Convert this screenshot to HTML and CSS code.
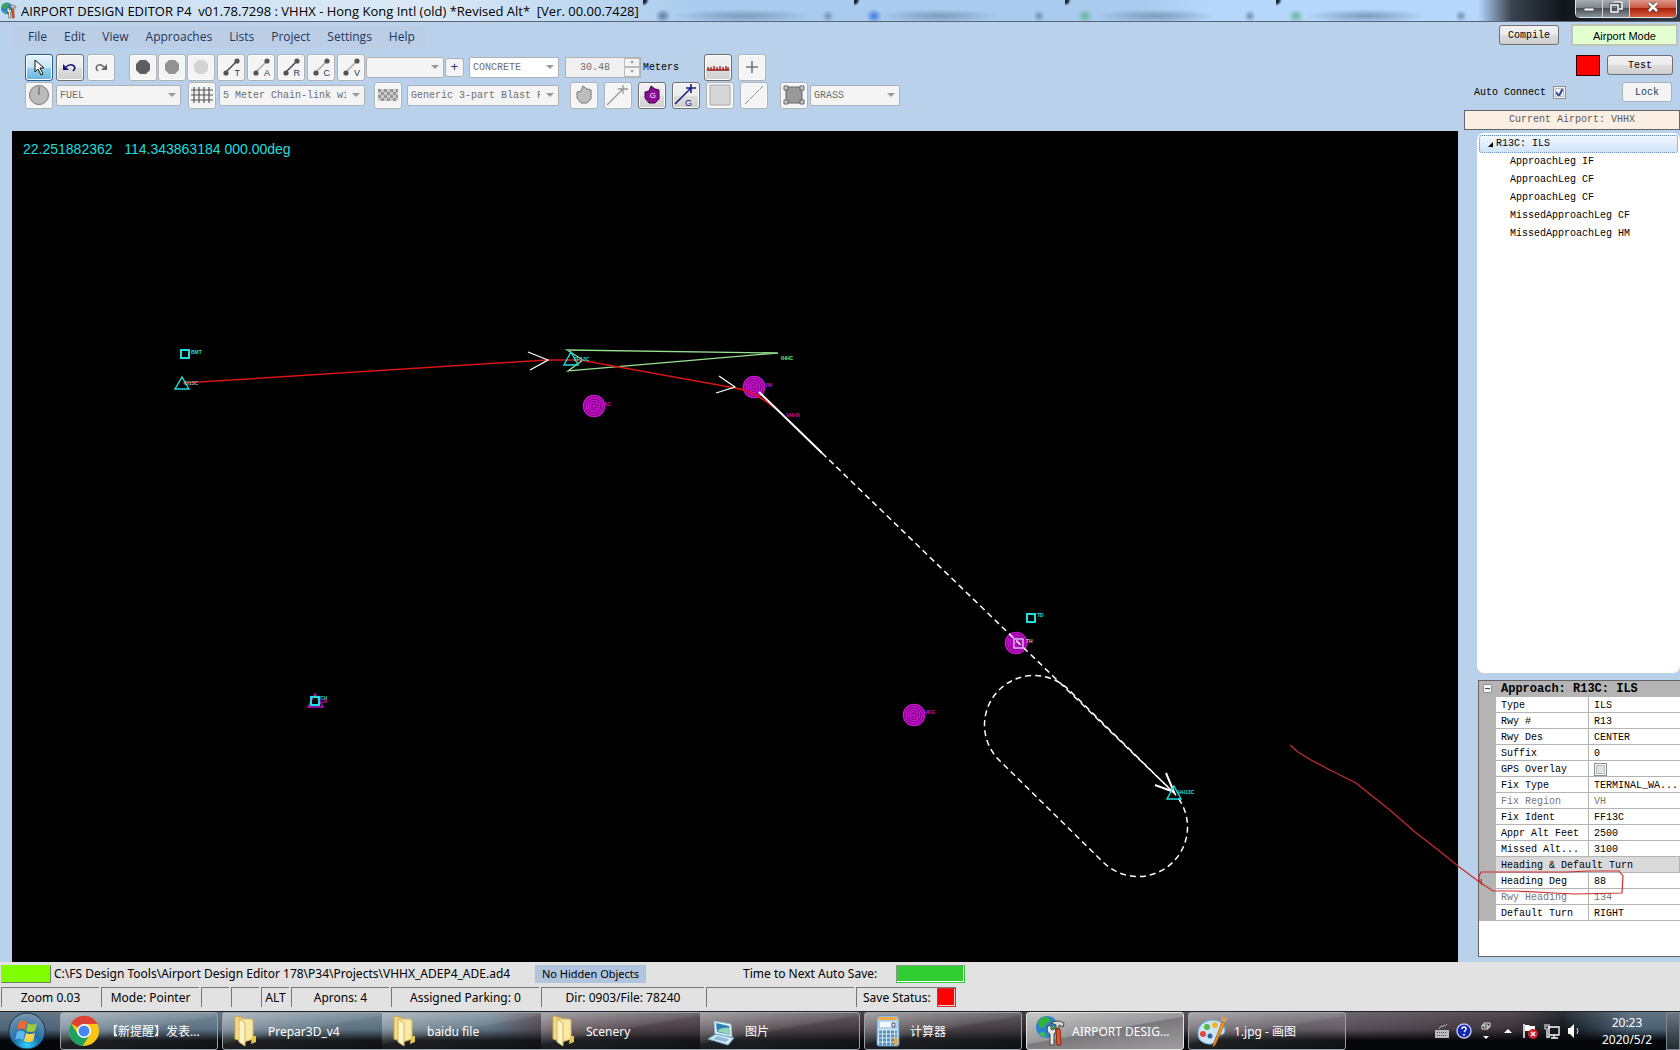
FILE: index.html
```html
<!DOCTYPE html>
<html lang="en">
<head>
  <meta charset="UTF-8" />
  <meta name="viewport" content="width=device-width, initial-scale=1.0"/>
  <title>Airport Design Editor P4</title>
  <link rel="stylesheet" href="styles.css">
</head>
<body>
  <!-- shared icons -->
  <svg class="defs" width="0" height="0">
    <defs>
      <symbol id="i-line" viewBox="0 0 26 24">
        <path d="M8 17L19 6" stroke="currentColor" stroke-width="1.5"/>
        <circle cx="8" cy="18" r="2.6" fill="#555"/><circle cx="19" cy="6" r="2.6" fill="#555"/>
      </symbol>
      <symbol id="i-folder" viewBox="0 0 32 32">
        <path d="M5 1l9 2v24l-9-3z" fill="#f4dd87" stroke="#c9a94c"/>
        <path d="M9 4h12q2 0 2 2v18l-12 4z" fill="#f9e9a6" stroke="#d4b65d"/>
        <path d="M9 4l6 4v23l-6-4z" fill="#fdf4c4" stroke="#d4b65d"/>
        <path d="M22 21h4v6l-5 2z" fill="#e7c84c"/>
      </symbol>
      <symbol id="i-globe" viewBox="0 0 32 32">
        <circle cx="13" cy="12" r="11" fill="#2d7fd0"/>
        <path d="M4 7q4-6 10-5l3 4-5 3-2 4-5-1zM13 13l7-2 3 5-5 6-4-3z" fill="#35b23d"/>
        <path d="M5 18l5-1 2 5q-5 0-7-4z" fill="#3bc446"/>
        <path d="M13 14q0-4 4-4v4l2 1 2-2q2 4-1 6v11h-4V19q-3-1-3-5z" fill="#e6e6e6" stroke="#444"/>
        <path d="M17 8q6-4 13 0l-1 4-4-2v3h-3v-3z" fill="#d8d8d8" stroke="#444"/>
        <path d="M22 14h4l1 16h-4z" fill="#e2572b" stroke="#8a2b10"/>
      </symbol>
      <symbol id="i-vor" viewBox="-12 -12 24 24">
        <circle r="11" fill="#700070"/>
        <g fill="none" stroke="#d010d8" stroke-width="1.4">
          <circle r="10.6"/><circle r="8.2"/><circle r="5.8"/><circle r="3.4"/><circle r="1"/>
        </g>
      </symbol>
    </defs>
  </svg>

  <header class="titlebar">
    <div class="glass"><i></i><i></i><i></i><i></i></div>
    <svg class="app-icon"><use href="#i-globe"/></svg>
    <h1>AIRPORT DESIGN EDITOR P4&nbsp; v01.78.7298 : VHHX - Hong Kong Intl (old) *Revised Alt*&nbsp; [Ver. 00.00.7428]</h1>
    <div class="window-buttons">
      <button aria-label="Minimize"><svg viewBox="0 0 14 12"><path d="M2 7h10v3H2z" fill="#fff" stroke="#555"/></svg></button>
      <button aria-label="Restore"><svg viewBox="0 0 14 12"><path d="M5 1h8v7h-3M2 4h7v7H2z" fill="none" stroke="#444" stroke-width="3"/><path d="M5 1h8v7h-3M2 4h7v7H2z" fill="none" stroke="#fff" stroke-width="1.5"/></svg></button>
      <button class="close" aria-label="Close"><svg viewBox="0 0 14 12"><path d="M3 2l8 8M11 2l-8 8" stroke="#533" stroke-width="4"/><path d="M3 2l8 8M11 2l-8 8" stroke="#fff" stroke-width="2.5"/></svg></button>
    </div>
  </header>

  <main class="client">
    <section class="editor">
      <nav class="menu">
        <a href="#">File</a><a href="#">Edit</a><a href="#">View</a><a href="#">Approaches</a><a href="#">Lists</a><a href="#">Project</a><a href="#">Settings</a><a href="#">Help</a>
      </nav>

      <div class="toolbar">
        <div class="group spaced">
          <button class="tool active" aria-label="Pointer"><svg viewBox="0 0 26 24"><path d="M9 5v12l3-3 3 6 2-1-3-6h4z" fill="#fff" stroke="#111"/></svg></button>
          <button class="tool on" aria-label="Undo"><svg viewBox="0 0 26 24"><path d="M9 12q4-4 8-1 2 2-1 5" fill="none" stroke="#14147c" stroke-width="1.6"/><path d="M6 9v6h6z" fill="#14147c"/></svg></button>
          <button class="tool" aria-label="Redo"><svg viewBox="0 0 26 24"><path d="M16 12q-4-4-7-1-2 2 1 5" fill="none" stroke="#666" stroke-width="1.5"/><path d="M19 9v6h-6z" fill="#666"/></svg></button>
        </div>
        <div class="group tight">
          <button class="tool" aria-label="Dark apron"><svg viewBox="0 0 26 24"><path d="M10 5h6l4 4v6l-4 4h-6l-4-4V9z" fill="#5e5e5e"/></svg></button>
          <button class="tool" aria-label="Medium apron"><svg viewBox="0 0 26 24"><path d="M10 5h6l4 4v6l-4 4h-6l-4-4V9z" fill="#929292"/></svg></button>
          <button class="tool" aria-label="Light apron"><svg viewBox="0 0 26 24"><path d="M10 5h6l4 4v6l-4 4h-6l-4-4V9z" fill="#d4d4d4"/></svg></button>
        </div>
        <div class="group links">
          <button class="tool dark" aria-label="Taxiway"><svg><use href="#i-line"/></svg><b>T</b></button>
          <button class="tool pale" aria-label="Apron link"><svg><use href="#i-line"/></svg><b>A</b></button>
          <button class="tool dark" aria-label="Runway link"><svg><use href="#i-line"/></svg><b>R</b></button>
          <button class="tool pale" aria-label="Closed link"><svg><use href="#i-line"/></svg><b>C</b></button>
          <button class="tool pale" aria-label="Vehicle link"><svg><use href="#i-line"/></svg><b>V</b></button>
        </div>
        <div class="group tight naming">
          <select class="w-name" aria-label="Name" disabled><option></option></select>
          <button class="small" aria-label="Add name">+</button>
        </div>
        <select class="w-surface open" aria-label="Surface"><option>CONCRETE</option></select>
        <div class="group width">
          <div class="spinner">
            <input id="width" type="text" value="30.48" disabled>
            <div class="spin"><button aria-label="Up">▲</button><button aria-label="Down">▼</button></div>
          </div>
          <label for="width">Meters</label>
        </div>
        <div class="group wide">
          <button class="tool on" aria-label="Ruler"><svg viewBox="0 0 26 24"><path d="M2 15h22M3 15v-3M6 15v-3M9 15v-4M12 15v-3M15 15v-4M18 15v-3M21 15v-4M23 15v-3" stroke="#a01818" stroke-width="1.3"/></svg></button>
          <button class="tool" aria-label="Add"><svg viewBox="0 0 26 24"><path d="M13 6v12M7 12h12" stroke="#777" stroke-width="1.6"/></svg></button>
        </div>
      </div>

      <div class="toolbar">
        <div class="group spaced fuel">
          <button class="tool" aria-label="Fuel"><svg viewBox="0 0 26 24"><circle cx="13" cy="12" r="9.500" fill="#bbb" stroke="#777"/><path d="M13 4v8" stroke="#777" stroke-width="1.500"/></svg></button>
          <select class="w-fuel" aria-label="Object" disabled><option>FUEL</option></select>
        </div>
        <div class="group spaced fence">
          <button class="tool" aria-label="Fence"><svg viewBox="0 0 26 24"><path d="M2 7h22M2 12h22M2 17h22M5 4v16M10 4v16M15 4v16M20 4v16" stroke="#555" stroke-width="1.2"/></svg></button>
          <select class="w-fence" aria-label="Fence type" disabled><option>5 Meter Chain-link wi</option></select>
        </div>
        <div class="group spaced blast">
          <button class="tool" aria-label="Blast fence"><svg viewBox="0 0 26 24"><path d="M3 6h20v12H3z" fill="#ccc"/><path d="M3 7.500h20M3 13.500h20" stroke="#969696" stroke-width="3" stroke-dasharray="3 3"/><path d="M6 10.500h17M6 16.500h17" stroke="#969696" stroke-width="3" stroke-dasharray="3 3"/></svg></button>
          <select class="w-blast" aria-label="Blast fence type" disabled><option>Generic 3-part Blast Fence</option></select>
        </div>
        <div class="group wide shapes">
          <button class="tool" aria-label="Polygon"><svg viewBox="0 0 26 24"><path d="M12 3l4 3 4 1v9l-4 4h-6l-4-5V9l4-1z" fill="#bdbdbd" stroke="#777"/></svg></button>
          <button class="tool" aria-label="Line"><svg viewBox="0 0 26 24"><path d="M2 22L18 6M13 6h10M18 2v9" stroke="#999" stroke-width="1.300"/></svg></button>
          <button class="tool on" aria-label="Ground polygon"><svg viewBox="0 0 26 24"><path d="M12 3l4 3 4 1v9l-4 4h-6l-4-5V9l4-1z" fill="#8b0a96" stroke="#3d0440"/></svg><b class="mid">G</b></button>
          <button class="tool on" aria-label="Ground line"><svg viewBox="0 0 26 24"><path d="M2 21L18 5M13 5h10M18 1v9" stroke="#1a1a8c" stroke-width="1.600"/></svg><b class="blue">G</b></button>
          <button class="tool" aria-label="Area"><svg viewBox="0 0 26 24"><path d="M3 2h20v20H3z" fill="#d7d7d7" stroke="#aaa"/></svg></button>
          <button class="tool" aria-label="Dashed line"><svg viewBox="0 0 26 24"><path d="M4 21L22 3" stroke="#888" stroke-dasharray="6 1"/></svg></button>
        </div>
        <div class="group links">
          <button class="tool" aria-label="Terrain"><svg viewBox="0 0 26 24"><path d="M5 4h16v16H5z" fill="#999" stroke="#666"/><path d="M3 3h4v4H3zM19 3h4v4h-4zM3 17h4v4H3zM19 17h4v4h-4z" fill="#ccc" stroke="#666"/></svg></button>
          <select class="w-surface" aria-label="Terrain type" disabled><option>GRASS</option></select>
        </div>
      </div>

      <div class="chart">
        <p class="position">22.251882362&nbsp;&nbsp; 114.343863184 000.00deg</p>
        <svg viewBox="12 131 1446 831" preserveAspectRatio="xMinYMin meet">
          <!-- ils feather -->
          <path class="ils" d="M567 350L778 353L568 371L583 360Z"/>
          <!-- approach legs -->
          <path class="leg" d="M183 383L547 360H580L735 388Q755 391 776 409"/>
          <path class="arrow" d="M528 352L548 360L530 370M719 376L735 387L716 393"/>
          <!-- vor / ndb -->
          <g>
            <use href="#i-vor" x="742" y="375" width="24" height="24"/>
            <use href="#i-vor" x="582" y="394" width="24" height="24"/>
            <use href="#i-vor" x="1004" y="631" width="24" height="24"/>
            <use href="#i-vor" x="902" y="703" width="24" height="24"/>
          </g>
          <path class="leg" d="M735 388Q755 391 776 409"/>
          <!-- missed approach and hold -->
          <path class="runway" d="M759 392L822 453"/>
          <path class="missed" d="M822 453L1172 791"/>
          <path class="missed" d="M1172 791A49 49 0 0 1 1104 863L999 760A49 49 0 0 1 1069 690L1172 791"/>
          <path class="arrow bold" d="M1166 773L1174 792L1155 785"/>
          <!-- fixes -->
          <path class="fix magenta" d="M315 694L323 707H308Z"/>
          <path class="fix" d="M182 377L189 389H175ZM571 352L578 365H564ZM1174 786L1181 799H1167Z"/>
          <path class="fix thick" d="M181 350h8v8h-8ZM1027 614h8v8h-8ZM311 697h8v8h-8Z"/>
          <path class="fix lilac" d="M1014 639h9v9h-9Z"/>
          <g class="names">
            <text x="191" y="354">BMT</text>
            <text class="grey" x="184" y="385">CI13C</text>
            <text x="574" y="361">FF13C</text>
            <text class="green" x="781" y="360">IHHC</text>
            <text class="magenta" x="764" y="387">HW</text>
            <text class="magenta" x="604" y="406">SC</text>
            <text class="magenta" x="786" y="417">VHHX</text>
            <text x="1037" y="617">TD</text>
            <text class="lilac" x="1026" y="643">TH</text>
            <text class="magenta" x="924" y="714">HKG</text>
            <text x="1178" y="794">HH13C</text>
            <text x="320" y="700">CH</text>
            <text class="magenta" x="320" y="703">CH</text>
          </g>
        </svg>
      </div>
    </section>

    <aside class="side">
      <div class="side-row top">
        <button class="btn compile">Compile</button>
        <output class="mode">Airport Mode</output>
      </div>
      <div class="side-row test">
        <span class="lamp"></span>
        <button class="btn">Test</button>
      </div>
      <div class="side-row lock">
        <label for="auto">Auto Connect</label>
        <input id="auto" class="check" type="checkbox" checked>
        <button class="btn dim">Lock</button>
      </div>
      <div class="current">Current Airport: VHHX</div>
      <ul class="tree">
        <li class="root"><svg viewBox="0 0 8 8"><path d="M7 2v5H2z"/></svg>R13C: ILS</li>
        <li>ApproachLeg IF</li>
        <li>ApproachLeg CF</li>
        <li>ApproachLeg CF</li>
        <li>MissedApproachLeg CF</li>
        <li>MissedApproachLeg HM</li>
      </ul>
      <div class="properties">
        <table>
          <colgroup><col class="gutter"><col class="key"><col></colgroup>
          <tr class="title"><td><button class="fold" aria-label="Collapse"></button></td><th colspan="2">Approach: R13C: ILS</th></tr>
          <tr><td></td><th>Type</th><td>ILS</td></tr>
          <tr><td></td><th>Rwy #</th><td>R13</td></tr>
          <tr><td></td><th>Rwy Des</th><td>CENTER</td></tr>
          <tr><td></td><th>Suffix</th><td>0</td></tr>
          <tr><td></td><th><label for="gps">GPS Overlay</label></th><td><input id="gps" class="check" type="checkbox"></td></tr>
          <tr><td></td><th>Fix Type</th><td>TERMINAL_WA...</td></tr>
          <tr class="off"><td></td><th>Fix Region</th><td>VH</td></tr>
          <tr><td></td><th>Fix Ident</th><td>FF13C</td></tr>
          <tr><td></td><th>Appr Alt Feet</th><td>2500</td></tr>
          <tr><td></td><th>Missed Alt...</th><td>3100</td></tr>
          <tr class="section"><td></td><th colspan="2">Heading &amp; Default Turn</th></tr>
          <tr><td></td><th>Heading Deg</th><td>88</td></tr>
          <tr class="off"><td></td><th>Rwy Heading</th><td>134</td></tr>
          <tr><td></td><th>Default Turn</th><td>RIGHT</td></tr>
        </table>
      </div>
    </aside>

    <!-- red pen mark over the heading row -->
    <svg class="pen" viewBox="1280 740 400 222"><path d="M1290 745L1298 752L1311 760L1330 770L1344 777L1356 783L1391 811L1415 832L1442 853L1458 866L1478 881L1493 891H1515L1553 893L1575 894L1622 893L1623 876L1619 871L1590 871L1566 872H1481L1479 876V880L1482 885L1481 879"/></svg>
  </main>

  <footer class="status">
    <div class="status-file">
      <span class="bar lime"></span>
      <span class="path">C:\FS Design Tools\Airport Design Editor 178\P34\Projects\VHHX_ADEP4_ADE.ad4</span>
      <span class="hidden-objects">No Hidden Objects</span>
      <span class="autosave">Time to Next Auto Save:</span>
      <span class="bar green"></span>
    </div>
    <div class="cells">
      <span>Zoom 0.03</span><span>Mode: Pointer</span><span></span><span></span><span>ALT</span><span>Aprons: 4</span><span>Assigned Parking: 0</span><span>Dir: 0903/File: 78240</span><span></span><span class="save">Save Status:<i></i></span>
    </div>
  </footer>

  <div class="taskbar">
    <button class="start" aria-label="Start">
      <svg viewBox="0 0 38 38">
        <defs><radialGradient id="orb" cx=".5" cy=".9" r=".9"><stop offset="0" stop-color="#2fd0ff"/><stop offset=".4" stop-color="#1d6fa8"/><stop offset="1" stop-color="#7f98ac"/></radialGradient></defs>
        <circle cx="19" cy="19" r="18" fill="url(#orb)" stroke="#12324c"/>
        <path d="M11 10q4-3 8 0l-2 8q-4-3-8 0z" fill="#ee6a33"/>
        <path d="M20 11q4 3 9 0l-2 8q-5 2-9 0z" fill="#9ccb3c"/>
        <path d="M9 20q4-3 8 0l-2 8q-4-3-8 0z" fill="#5db9f0"/>
        <path d="M18 21q4 2 9 0l-2 8q-5 2-9 0z" fill="#fcd14a"/>
      </svg>
    </button>
    <button class="task">
      <svg viewBox="0 0 32 32"><circle cx="16" cy="16" r="15" fill="#fbc615"/><path d="M16 16L3 8.500A15 15 0 0 1 29.500 9H16z" fill="#dd4335"/><path d="M3 8.500A15 15 0 0 0 14.500 31L22 19.500H10z" fill="#1da160"/><circle cx="16" cy="16" r="7" fill="#fff"/><circle cx="16" cy="16" r="5.500" fill="#4a86f0"/></svg>
      <span>【新提醒】发表...</span>
    </button>
    <div class="task-group">
      <button class="task"><svg><use href="#i-folder"/></svg><span>Prepar3D_v4</span></button>
      <button class="task"><svg><use href="#i-folder"/></svg><span>baidu file</span></button>
      <button class="task"><svg><use href="#i-folder"/></svg><span>Scenery</span></button>
      <button class="task">
        <svg viewBox="0 0 32 32"><path d="M7 6l17 3 1 13-17-3z" fill="#e8f3fa" stroke="#8db8d8"/><path d="M9 8l13 3 1 9-13-3z" fill="#2b7fb5"/><path d="M10 16q5-4 12-3l1 7z" fill="#8fd6b5"/><path d="M1 24l8-5 18 4-6 7z" fill="#d5ebf7" stroke="#6ba7cf"/><path d="M6 24l4-3 12 3-3 3z" fill="#8fb9d3"/></svg>
        <span>图片</span>
      </button>
    </div>
    <button class="task">
      <svg viewBox="0 0 32 32"><rect x="5" y="1" width="22" height="30" rx="2" fill="#cfe6f5" stroke="#4c8fc0"/><path d="M6 2h20v3H6z" fill="#f3a94a"/><path d="M7 6h18v7H7z" fill="#eef8ff" stroke="#8cb7d4"/><path d="M20 8h3v4h-3z" fill="none" stroke="#446"/><path d="M7 17h3m1 0h3m1 0h3m1 0h3m1 0h2M7 21h3m1 0h3m1 0h3m1 0h3m1 0h2M7 25h3m1 0h3m1 0h3m1 0h3M7 29h3m1 0h3m1 0h3m1 0h3" stroke="#538fbd" stroke-width="3"/><path d="M22 23h4v7h-4z" fill="#ecaa38"/></svg>
      <span>计算器</span>
    </button>
    <button class="task current-task"><svg><use href="#i-globe"/></svg><span>AIRPORT DESIG...</span></button>
    <button class="task">
      <svg viewBox="0 0 32 32"><path d="M2 17Q3 7 15 5q14 0 14 10 0 5-6 5-4 1-4 5-1 5-7 4Q1 27 2 17z" fill="#c8e6f7" stroke="#6ea9cf"/><circle cx="7" cy="19" r="3" fill="#e24a3a"/><circle cx="11" cy="12" r="3" fill="#54b948"/><circle cx="19" cy="10" r="3" fill="#f5b32c"/><circle cx="14" cy="21" r="2.500" fill="#355f9e"/><path d="M26 7l3 1-10 22-2 2 1-4z" fill="#ee9b3a" stroke="#b9681a"/><path d="M25 1l7 2-3 5-4-2z" fill="#c99d68"/></svg>
      <span>1.jpg - 画图</span>
    </button>
    <div class="tray">
      <svg viewBox="0 0 16 16"><path d="M1 7h14v8H1z" fill="#bbb"/><path d="M3 9.500h10M3 12.500h10" stroke="#555" stroke-dasharray="1 1"/><path d="M5 6q1-3 4-3t4-2" fill="none" stroke="#bbb"/></svg>
      <svg viewBox="0 0 16 16"><circle cx="8" cy="8" r="7" fill="#1426b8" stroke="#b9c2ea" stroke-width="1.500"/><path d="M6 6q0-2 2-2t2 2q0 1-2 3" fill="none" stroke="#fff" stroke-width="1.500"/><path d="M7 11h2v1.500H7z" fill="#fff"/></svg>
      <svg viewBox="0 0 16 20"><path d="M6 2h6v4H6zM4 4h6v4H4z" fill="#222" stroke="#eee"/><path d="M5 15h6l-3 3z" fill="#fff"/></svg>
      <svg viewBox="0 0 16 16"><path d="M4 10l4-4 4 4z" fill="#fff"/></svg>
      <svg viewBox="0 0 16 16"><path d="M2 1v14" stroke="#fff" stroke-width="1.500"/><path d="M3 2h4l1 1h5v6H8L7 8H3z" fill="#fff"/><circle cx="11" cy="11" r="5" fill="#d3202a"/><path d="M9 9l4 4M13 9l-4 4" stroke="#fff" stroke-width="1.500"/></svg>
      <svg viewBox="0 0 16 16"><path d="M5 4h10v8H5zM7 15h7M10 12v3M3 7v7h3" fill="none" stroke="#fff" stroke-width="1.300"/><path d="M1 1v5h4V1M3 1v3" fill="none" stroke="#fff"/></svg>
      <svg viewBox="0 0 16 16"><path d="M2 5h2l4-4v14l-4-4H2z" fill="#fff"/><path d="M11 5q2 3 0 6" fill="none" stroke="#ddd"/></svg>
    </div>
    <div class="clock"><time>20:23</time><time>2020/5/2</time></div>
    <button class="desktop" aria-label="Show desktop"></button>
  </div>
</body>
</html>
```
FILE: styles.css
```css
* {
  box-sizing: border-box;
}

body {
  margin: 0;
  height: 100vh;
  display: flex;
  flex-direction: column;
  overflow: hidden;
  background: #b9d1ea;
  font-family: "Liberation Mono", monospace;
  font-size: 10px;
  color: #000;
}

button, select, input {
  font: inherit;
  margin: 0;
  padding: 0;
}

.defs {
  position: absolute;
}

/* title bar */
.titlebar {
  position: relative;
  display: flex;
  align-items: center;
  height: 22px;
  flex: none;
  gap: 4px;
  padding-right: 3px;
  background: linear-gradient(90deg, #c5dcf0, #dbe9f6 25%, #a9cbee 42%, #a9cbee 68%, #b5d7fb 72%, #b5d7fb 88%, #39424d 90%, #11161c 93%, #333c48);
  border-bottom: 1px solid #5a6675;
}

.glass {
  position: absolute;
  inset: 0 193px 0 643px;
  display: flex;
}

.glass i {
  flex: 1;
  background:
    radial-gradient(circle at 0 0, #1d2733 3px, transparent 6px),
    radial-gradient(ellipse 8px 7px at 20px 16px, #5f7f9f, transparent),
    radial-gradient(ellipse 70px 7px at 100px 16px, #7d9cbc, transparent),
    radial-gradient(ellipse 6px 6px at 185px 16px, #7590ad, transparent);
}

.glass i:nth-child(2) {
  background:
    radial-gradient(circle at 0 0, #1d2733 3px, transparent 6px),
    radial-gradient(ellipse 8px 7px at 20px 16px, #3c7ddd, transparent),
    radial-gradient(ellipse 60px 7px at 85px 16px, #7d9cbc, transparent),
    radial-gradient(ellipse 6px 6px at 185px 16px, #7590ad, transparent);
}

.glass i:nth-child(n+3) {
  background:
    radial-gradient(circle at 0 0, #1d2733 3px, transparent 6px),
    radial-gradient(ellipse 8px 7px at 20px 16px, #66b99a, transparent),
    radial-gradient(ellipse 60px 7px at 90px 16px, #7d9cbc, transparent),
    radial-gradient(ellipse 6px 6px at 185px 16px, #7590ad, transparent);
}

.app-icon {
  width: 17px;
  height: 17px;
}

.titlebar h1 {
  position: relative;
  margin: 0;
  flex: 1;
  font: 13px "Open Sans", sans-serif;
  white-space: nowrap;
}

.window-buttons {
  position: relative;
  display: flex;
  align-self: flex-start;
  height: 18px;
  border: 1px solid #dce6ee;
  border-top: 0;
  border-radius: 0 0 5px 5px;
  overflow: hidden;
}

.window-buttons button {
  width: 27px;
  border: 0;
  border-right: 1px solid #cdd6de;
  background: linear-gradient(#a8adb3, #7b8188 50%, #4b5158 50%, #8a9199);
}

.window-buttons .close {
  width: 46px;
  border: 0;
  background: linear-gradient(#dc9a8a, #c9513a 50%, #a81f0c 50%, #d8603c);
}

.window-buttons svg {
  width: 14px;
  height: 12px;
}

/* main window */
.client {
  position: relative;
  flex: 1;
  min-height: 0;
  display: grid;
  grid-template-columns: minmax(0, 1fr) 216px;
  gap: 6px;
}

.editor {
  display: flex;
  flex-direction: column;
  min-width: 0;
  padding-left: 12px;
}

.menu {
  display: flex;
  align-self: flex-start;
  gap: 17px;
  margin: 4px 0 5px;
  padding: 0 10px 0 16px;
  background: #bccde6;
  font: 12px/22px "Open Sans", sans-serif;
}

.menu a {
  color: #1e395b;
  text-decoration: none;
}

.toolbar {
  display: flex;
  align-items: center;
  height: 28px;
  padding-left: 13px;
}

.group {
  display: flex;
  align-items: center;
}

.tight {
  gap: 1px;
}

.links {
  gap: 2px;
  margin-left: 2px;
}

.spaced {
  gap: 3px;
  margin-right: 14px;
}

.wide {
  gap: 6px;
}

.naming {
  margin: 0 5px 0 1px;
}

.width {
  width: 139px;
  gap: 2px;
  margin-left: 6px;
}

.fuel {
  margin-right: 7px;
}

.fence {
  margin-right: 9px;
}

.blast {
  gap: 5px;
  margin-right: 11px;
}

.shapes {
  margin-right: 10px;
}

.tool {
  position: relative;
  flex: none;
  width: 28px;
  height: 27px;
  border: 1px solid #adb2b5;
  border-radius: 3px;
  background: #f4f4f4;
  box-shadow: inset 0 0 0 1px #fcfcfc;
}

.tool svg {
  display: block;
  width: 26px;
  height: 24px;
}

.tool.on {
  border-color: #707070;
  background: linear-gradient(#f2f2f2, #ebebeb 50%, #dddddd 50%, #cfcfcf);
}

.tool.active {
  border-color: #2c628b;
  background: linear-gradient(#e5f4fc, #c4e5f6 50%, #98d1ef 50%, #68b3db);
}

.tool b {
  position: absolute;
  right: 4px;
  bottom: 2px;
  font: 9px "Liberation Sans", sans-serif;
  color: #1e395b;
}

.tool b.mid {
  right: 9px;
  bottom: 8px;
  font-size: 8px;
  color: #fff;
}

.tool b.blue {
  right: 7px;
  bottom: 0;
  color: #1a1a8c;
}

.dark {
  color: #444;
}

.pale {
  color: #aaa;
}

.small {
  width: 19px;
  height: 19px;
  border: 1px solid #adb2b5;
  border-radius: 3px;
  background: #f4f4f4;
  color: #1e395b;
  font-size: 13px;
  line-height: 15px;
}

select {
  appearance: none;
  height: 21px;
  padding: 0 18px 0 3px;
  border: 1px solid #adb2b5;
  border-radius: 2px;
  background: #f4f4f4 url("data:image/svg+xml,%3Csvg xmlns='http://www.w3.org/2000/svg' width='8' height='4'%3E%3Cpath d='M0 0h8L4 4z' fill='%23999'/%3E%3C/svg%3E") no-repeat right 4px center;
  color: #6d6d6d;
  opacity: 1;
}

select.open {
  background-color: #fff;
}

.w-name {
  width: 78px;
}

.w-surface {
  width: 90px;
}

.w-fuel {
  width: 125px;
}

.w-fence {
  width: 146px;
}

.w-blast {
  width: 152px;
}

.spinner {
  display: flex;
  width: 76px;
  height: 21px;
  border: 1px solid #adb2b5;
  background: #f0f0f0;
}

.spinner input {
  width: 58px;
  border: 0;
  background: none;
  text-align: center;
  color: #6d6d6d;
}

.spin {
  flex: 1;
  display: flex;
  flex-direction: column;
}

.spin button {
  flex: 1;
  min-height: 0;
  border: 1px solid #bbb;
  background: #f4f4f4;
  color: #888;
  font-size: 5px;
  line-height: 6px;
}

/* chart */
.chart {
  position: relative;
  flex: 1;
  min-height: 0;
  margin-top: 22px;
  background: #000;
}

.chart svg {
  display: block;
  width: 100%;
  height: 100%;
}

.position {
  position: absolute;
  top: 10px;
  left: 11px;
  margin: 0;
  font: 14px/16px "Liberation Sans", sans-serif;
  color: #1fdede;
}

.chart path {
  fill: none;
}

.ils {
  stroke: #97e08f;
  stroke-width: 1.3;
}

.leg {
  stroke: #d81414;
  stroke-width: 1.5;
}

.arrow {
  stroke: #fff;
  stroke-width: 1.3;
}

.bold, .runway {
  stroke: #fff;
  stroke-width: 2;
}

.missed {
  stroke: #fff;
  stroke-width: 1.5;
  stroke-dasharray: 6 4;
}

.fix {
  stroke: #1fdede;
  stroke-width: 1.4;
}

.fix.thick {
  stroke-width: 2;
}

.fix.magenta {
  stroke: #c010d0;
}

.fix.lilac {
  stroke: #d8b4ff;
}

.names {
  font: bold 5px "Liberation Sans", sans-serif;
  fill: #1fdede;
}

.names .magenta {
  fill: #c010d0;
}

.names .green {
  fill: #7fe07f;
}

.names .grey {
  fill: #9fb0b0;
}

.names .lilac {
  fill: #d8b4ff;
}

/* side panel */
.side {
  display: flex;
  flex-direction: column;
  min-height: 0;
  padding: 2px 0 5px;
}

.side-row {
  display: flex;
  align-items: center;
  justify-content: flex-end;
  height: 22px;
}

.side-row.top {
  gap: 12px;
  padding-right: 2px;
}

.side-row.test {
  gap: 7px;
  margin: 8px 0 5px;
  padding-right: 7px;
}

.side-row.lock {
  padding-right: 8px;
  margin-bottom: 7px;
}

.btn {
  width: 66px;
  height: 20px;
  border: 1px solid #707070;
  border-radius: 3px;
  background: linear-gradient(#f2f2f2, #ebebeb 50%, #dddddd 50%, #cfcfcf);
}

.btn.compile {
  width: 60px;
}

.btn.dim {
  width: 50px;
  margin-left: 56px;
  border-color: #adb2b5;
  background: #f4f4f4;
  color: #1e395b;
}

.mode {
  width: 107px;
  height: 22px;
  border: 2px solid #bdc4b6;
  background: #e4ffcf;
  font: 11px/20px "Liberation Sans", sans-serif;
  text-align: center;
}

.lamp {
  width: 24px;
  height: 21px;
  border: 1px solid #300;
  background: #f00;
}

.check {
  appearance: none;
  width: 13px;
  height: 13px;
  border: 1px solid #8e8f8f;
  background: #dfe2e4;
  box-shadow: inset 0 0 0 1px #f4f4f4, inset 0 0 0 2px #b8bec4;
}

.check:checked {
  background: #f4f4f4 url("data:image/svg+xml,%3Csvg xmlns='http://www.w3.org/2000/svg' width='11' height='11'%3E%3Cpath d='M2 5l3 4 4-8' fill='none' stroke='%2333489c' stroke-width='2'/%3E%3C/svg%3E") center;
}

.side-row .check {
  margin-left: 7px;
}

.current {
  height: 20px;
  border: 1px solid #646464;
  background: #fbeee2;
  line-height: 18px;
  text-align: center;
  color: #5a5a5a;
}

.tree {
  flex: 1;
  min-height: 0;
  margin: 3px 0 7px 13px;
  padding: 2px;
  border-radius: 7px;
  background: #fff;
  list-style: none;
  line-height: 18px;
}

.tree li {
  padding-left: 31px;
}

.tree .root {
  display: flex;
  align-items: center;
  gap: 2px;
  height: 18px;
  padding-left: 6px;
  border: 1px dotted #5b86b5;
  border-radius: 3px;
  background: linear-gradient(#f1f8fe, #cfe4fa);
}

.tree svg {
  width: 8px;
  height: 8px;
}

.properties {
  height: 277px;
  margin-left: 14px;
  border: 1px solid #646464;
  border-right: 0;
  background: #fff;
}

.properties table {
  width: 100%;
  table-layout: fixed;
  border-spacing: 0;
}

.gutter {
  width: 17px;
}

.key {
  width: 93px;
}

.properties th, .properties td {
  height: 16px;
  padding: 2px 0 0 5px;
  border-bottom: 1px solid #b4b4b4;
  line-height: 13px;
  font-weight: normal;
  text-align: left;
  white-space: nowrap;
  overflow: hidden;
}

.properties th {
  border-right: 1px solid #b4b4b4;
}

.properties td:first-child {
  padding: 0 4px;
  background: #b4b4b4;
}

.properties .title th {
  background: #b4b4b4;
  font-size: 12px;
  font-weight: bold;
}

.properties .section th {
  background: #dadada;
}

.properties .off {
  color: #777;
}

.properties .check {
  display: block;
}

.fold {
  display: block;
  width: 9px;
  height: 9px;
  border: 1px solid #8a94a8;
  border-radius: 1px;
  background: linear-gradient(#445, #445) center / 5px 1px no-repeat #f4f4f4;
}

.pen {
  position: absolute;
  right: 0;
  bottom: 0;
  width: 400px;
  height: 222px;
  pointer-events: none;
}

.pen path {
  fill: none;
  stroke: #cc2e2e;
  stroke-width: 1.2;
}

/* status area */
.status {
  flex: none;
  height: 49px;
  background: #e2e2e2;
  font: 12px/18px "Noto Sans", sans-serif;
  white-space: nowrap;
}

.status-file {
  display: flex;
  align-items: center;
  height: 24px;
  padding-left: 1px;
}

.bar {
  flex: none;
  height: 18px;
  border: 1px solid;
}

.lime {
  width: 50px;
  margin-right: 3px;
  background: #80ff00;
  border-color: #80ff00 #6e7a62 #6e7a62 #80ff00;
}

.green {
  width: 69px;
  background: #32cd32;
  border-color: #8a9a8a #32cd32 #32cd32 #8a9a8a;
  box-shadow: inset -1px -1px #fff;
}

.path {
  width: 481px;
}

.autosave {
  width: 153px;
}

.hidden-objects {
  width: 111px;
  margin-right: 97px;
  background: #b0c4de;
  font-size: 11px;
  text-align: center;
}

.cells {
  display: flex;
  gap: 2px;
  padding: 1px 0 0 1px;
}

.cells span {
  width: 98px;
  height: 20px;
  border-top: 1px solid #777;
  border-left: 1px solid #777;
  line-height: 20px;
  text-align: center;
}

.cells span:nth-child(n+3):nth-child(-n+5) {
  width: 28px;
}

.cells span:nth-child(7) {
  width: 148px;
}

.cells span:nth-child(8) {
  width: 163px;
}

.cells span:nth-child(9) {
  width: 148px;
}

.cells .save {
  display: flex;
  width: 100px;
  padding-left: 6px;
}

.save i {
  width: 19px;
  margin-left: 6px;
  border: 1px solid #c33;
  background: #f00;
  box-shadow: inset -1px -1px #fcc;
}

/* taskbar */
.taskbar {
  flex: none;
  display: flex;
  height: 39px;
  border-top: 1px solid #222;
  background:
    linear-gradient(rgba(255,255,255,.12), transparent 45%, #05070a 75%),
    linear-gradient(90deg, #4d6577 0, #4d6577 29%, #3a2c33 33%, #302a30 62%, #58505a 80%, #3c3238 90%, #10151b 93%, #4a6074 97%);
  font: 12px "Noto Sans", "Noto Sans CJK SC", sans-serif;
  color: #fff;
}

.taskbar button {
  color: #fff;
}

.start {
  width: 60px;
  border: 0;
  background: none;
}

.start svg {
  display: block;
  width: 38px;
  height: 38px;
  margin-left: 8px;
}

.task {
  display: flex;
  align-items: center;
  flex: none;
  gap: 6px;
  width: 158px;
  margin-right: 4px;
  padding: 0 7px;
  border: 1px solid #9aa2a9;
  border-radius: 3px;
  background: linear-gradient(170deg, rgba(255,255,255,.5), rgba(255,255,255,.2) 45%, rgba(255,255,255,.1) 50%, rgba(255,255,255,.04));
  white-space: nowrap;
}

.task svg {
  flex: none;
  width: 32px;
  height: 32px;
}

.task-group {
  display: flex;
  flex: none;
  margin-right: 4px;
  border: 1px solid #9aa2a9;
  border-radius: 3px;
}

.task-group .task {
  width: 159px;
  margin: 0;
  border: 0;
  border-radius: 0;
}

.current-task {
  border-color: #e4e4e4;
  background: linear-gradient(170deg, #c8c8c8, #99989a 48%, #7a787b 50%, #a09da0);
}

.tray {
  display: flex;
  align-items: center;
  gap: 6px;
  margin-left: auto;
  margin-right: 6px;
}

.tray svg {
  width: 16px;
  height: 20px;
}

.clock {
  display: flex;
  flex-direction: column;
  width: 78px;
  padding-top: 2px;
  line-height: 17px;
  text-align: center;
}

.desktop {
  width: 14px;
  border: 1px solid #7d8790;
  background: linear-gradient(#6a7681, #222a32);
}
```
